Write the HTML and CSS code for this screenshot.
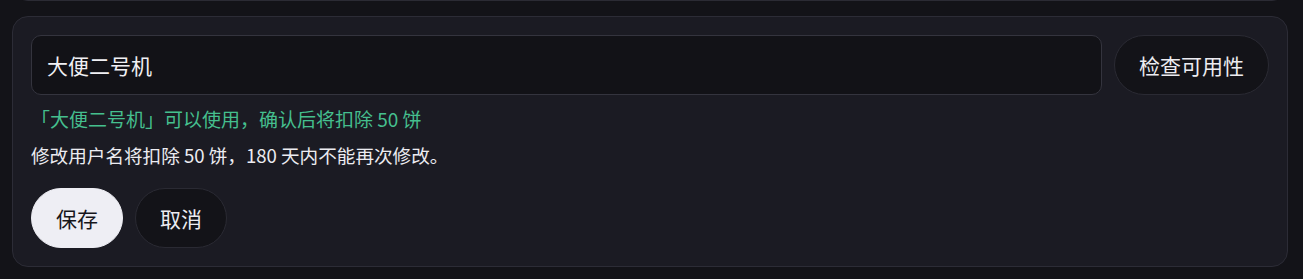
FILE: index.html
```html
<!DOCTYPE html>
<html lang="zh-CN">
<head>
<meta charset="utf-8">
<title>修改用户名</title>
<link rel="stylesheet" href="styles.css">
</head>
<body>
  <div class="page">
    <div class="prev-card"></div>
    <section class="card">
      <div class="name-row">
        <div class="name-input">大便二号机</div>
        <button class="btn btn-dark btn-check">检查可用性</button>
      </div>
      <p class="status-ok">「大便二号机」可以使用，确认后将扣除 50 饼</p>
      <p class="note">修改用户名将扣除 50 饼，180 天内不能再次修改。</p>
      <div class="actions">
        <button class="btn btn-light">保存</button>
        <button class="btn btn-dark">取消</button>
      </div>
    </section>
  </div>
</body>
</html>
```

FILE: styles.css
```css
* { box-sizing: border-box; }

html, body {
  margin: 0;
  padding: 0;
  background: #131318;
  height: 100%;
  overflow: hidden;
}

body {
  font-family: "Noto Sans CJK SC", "Noto Sans", "Liberation Sans", sans-serif;
  color: #ececf1;
}

.page {
  padding: 0 15px 0 12px;
}

.prev-card {
  height: 40px;
  margin-top: -39px;
  border: 1px solid #2b2b34;
  border-radius: 16px;
  background: #1a1a22;
}

.card {
  margin-top: 15px;
  background: #1b1b23;
  border: 1px solid #2c2c36;
  border-radius: 16px;
  padding: 18px;
}

.name-row {
  display: flex;
  gap: 12px;
}

.name-input {
  flex: 1;
  height: 60px;
  display: flex;
  align-items: center;
  padding: 0 15px;
  background: #121217;
  border: 1px solid #34343e;
  border-radius: 10px;
  font-size: 21px;
  color: #f0f0f4;
}

.btn {
  height: 60px;
  border-radius: 30px;
  padding: 0 24px;
  font-family: inherit;
  font-size: 21px;
  cursor: pointer;
}

.btn-dark {
  background: #131318;
  border: 1px solid #2a2a33;
  color: #ececf1;
}

.btn-light {
  background: #eeeef4;
  border: 1px solid #eeeef4;
  color: #16161b;
}

.status-ok {
  margin: 12px 0 0;
  line-height: 24px;
  font-size: 19px;
  color: #45bf8e;
}

.note {
  margin: 12px 0 0;
  line-height: 24px;
  font-size: 18.6px;
  color: #ececf1;
}

.actions {
  display: flex;
  gap: 12px;
  margin-top: 21px;
}
```
